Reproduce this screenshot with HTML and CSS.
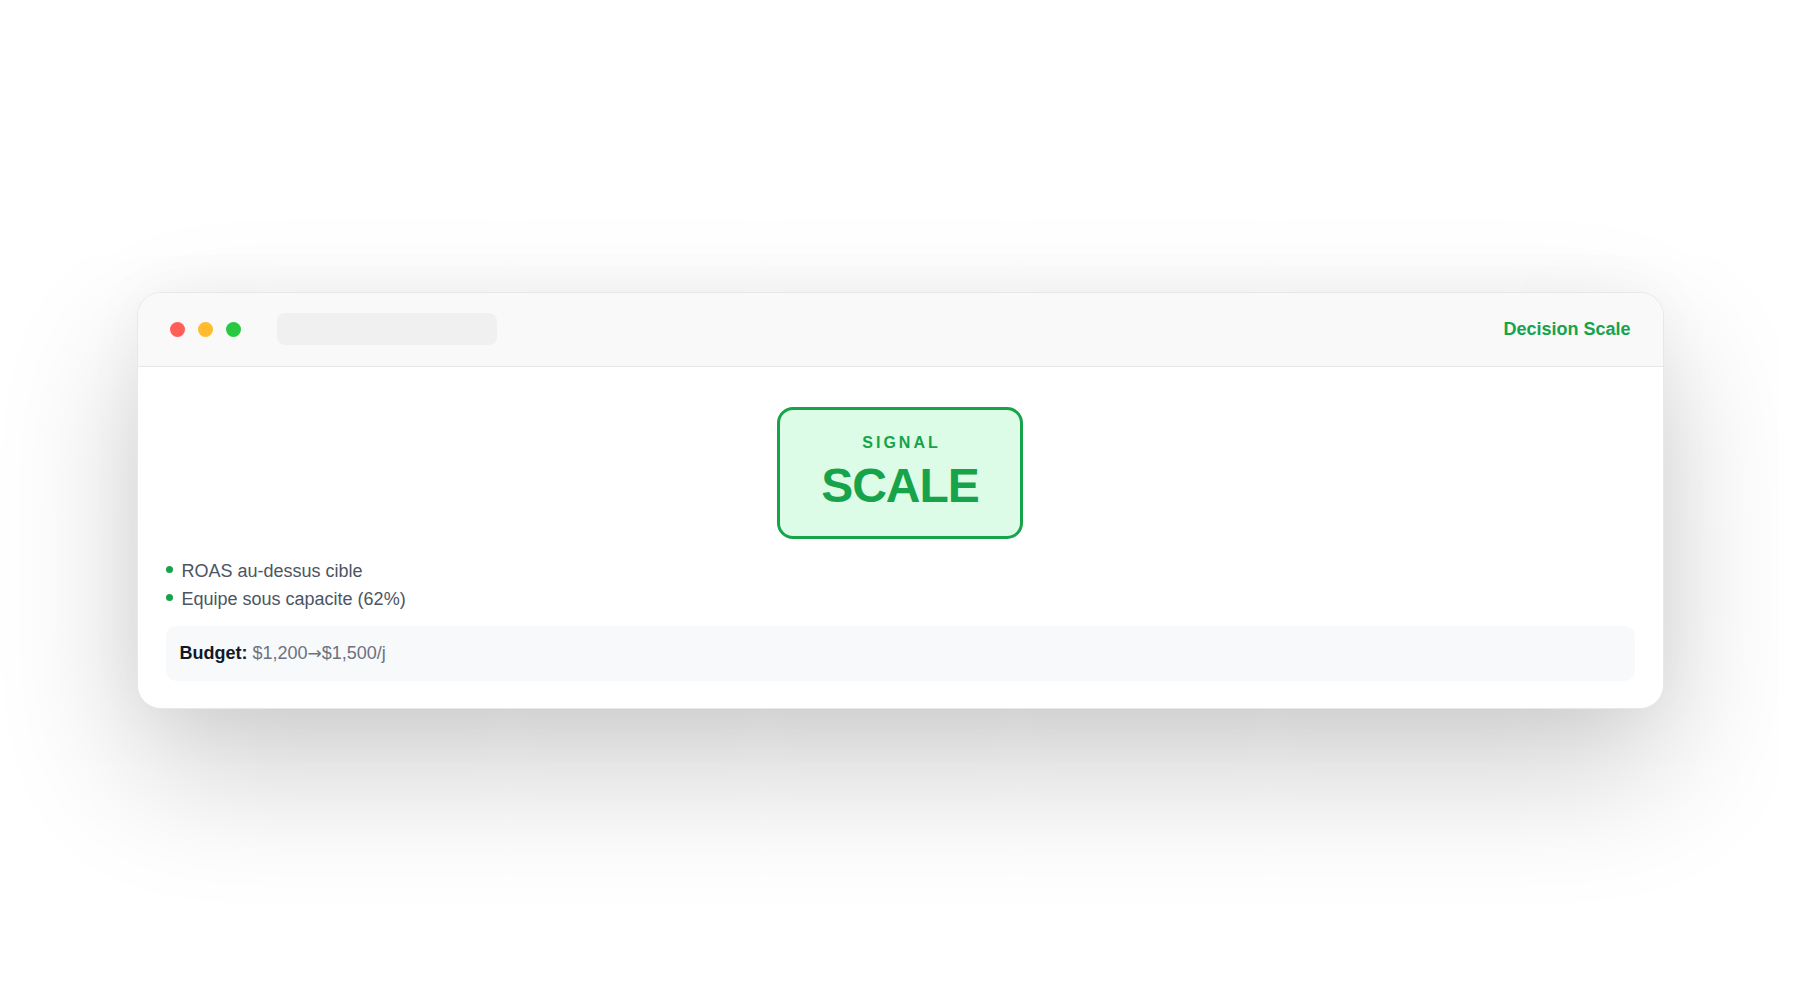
FILE: index.html
```html
<!DOCTYPE html>
<html lang="fr">
<head>
<meta charset="utf-8">
<title>Decision Scale</title>
<link rel="stylesheet" href="styles.css">
</head>
<body>
<div class="window">
  <div class="titlebar">
    <div class="lights">
      <span class="light red"></span>
      <span class="light yellow"></span>
      <span class="light green"></span>
    </div>
    <div class="urlbar"></div>
    <div class="title">Decision Scale</div>
  </div>
  <div class="content">
    <div class="badge-row">
      <div class="badge">
        <div class="badge-label">SIGNAL</div>
        <div class="badge-value">SCALE</div>
      </div>
    </div>
    <ul class="reasons">
      <li class="reason"><span class="dot"></span><span>ROAS au-dessus cible</span></li>
      <li class="reason"><span class="dot"></span><span>Equipe sous capacite (62%)</span></li>
    </ul>
    <div class="budget"><strong>Budget:</strong> <span class="budget-val">$1,200<span class="arrow">→</span>$1,500/j</span></div>
  </div>
</div>
</body>
</html>
```
FILE: styles.css
```css
html, body {
  margin: 0;
  padding: 0;
}
body {
  width: 1800px;
  height: 1000px;
  background: #ffffff;
  display: flex;
  align-items: center;
  justify-content: center;
  font-family: "Liberation Sans", Arial, Helvetica, sans-serif;
}
.window {
  width: 1527px;
  box-sizing: border-box;
  background: #ffffff;
  border: 1px solid #e8e8ec;
  border-radius: 24px;
  overflow: hidden;
  box-shadow: 0 60px 140px rgba(0, 0, 0, 0.2), 0 0 60px rgba(0, 0, 0, 0.04);
}
.titlebar {
  height: 74px;
  box-sizing: border-box;
  background: #f9f9f9;
  border-bottom: 1px solid #e5e5ea;
  display: flex;
  align-items: center;
  padding: 0 32px;
}
.lights {
  display: flex;
  gap: 13px;
}
.light {
  width: 15px;
  height: 15px;
  border-radius: 50%;
  display: block;
}
.red { background: #ff5f57; }
.yellow { background: #febc2e; }
.green { background: #28c840; }
.urlbar {
  width: 220px;
  height: 32px;
  border-radius: 8px;
  background: #f0f0f0;
  margin-left: 36px;
}
.title {
  margin-left: auto;
  color: #16a34a;
  font-weight: 700;
  font-size: 18px;
}
.content {
  padding: 40px 28px 27px;
}
.badge-row {
  display: flex;
  justify-content: center;
}
.badge {
  border: 3px solid #16a34a;
  background: #dcfce7;
  border-radius: 16px;
  padding: 25px 41px 26px;
  display: flex;
  flex-direction: column;
  align-items: center;
  color: #16a34a;
}
.badge-label {
  font-size: 16px;
  line-height: 16px;
  font-weight: 700;
  letter-spacing: 3px;
  margin-right: -3px;
}
.badge-value {
  font-size: 48px;
  line-height: 48px;
  font-weight: 700;
  letter-spacing: -1px;
  margin-top: 11px;
}
.reasons {
  list-style: none;
  margin: 18px 0 0;
  padding: 0;
}
.reason {
  display: flex;
  align-items: flex-start;
  font-size: 18px;
  line-height: 28px;
  color: #4b5563;
}
.dot {
  width: 7px;
  height: 7px;
  border-radius: 50%;
  background: #16a34a;
  margin-top: 9px;
  margin-right: 9px;
  flex: none;
}
.budget {
  margin-top: 13px;
  background: #f8f9fb;
  border-radius: 10px;
  padding: 14px 14px;
  font-size: 18px;
  line-height: 27px;
  color: #111827;
}
.budget strong {
  font-weight: 700;
}
.budget-val {
  color: #6b7280;
}
.arrow {
  font-family: "DejaVu Sans", sans-serif;
  font-size: 17px;
}
```
